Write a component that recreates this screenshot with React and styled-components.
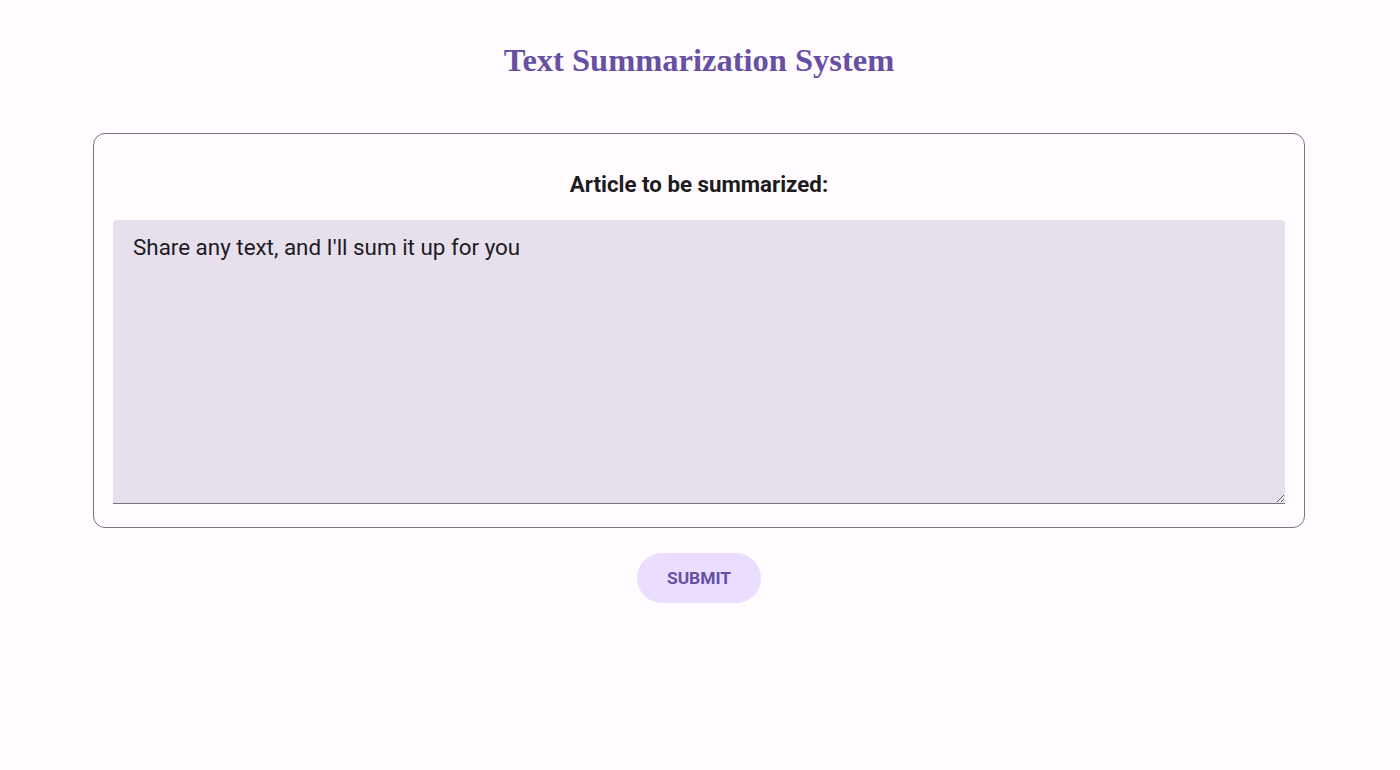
import styled, { createGlobalStyle } from "styled-components";

const GlobalStyle = createGlobalStyle`
    body {
        margin: 0;
        background-color: #FFFBFE;
        font-family: 'Roboto', sans-serif;
    }
`

export default function App() {
    return (
        <Page>
            <GlobalStyle />
            <Title>Text Summarization System</Title>
            <Card>
                <Label htmlFor="article">Article to be summarized:</Label>
                <TextBox id="article" placeholder="Share any text, and I'll sum it up for you" />
            </Card>
            <SubmitButton>SUBMIT</SubmitButton>
        </Page>
    );
}

const Page = styled.div`
    min-height: 770px;
    display: flex;
    flex-direction: column;
    align-items: center;
    padding-right: 2px;
    background-color: #FFFBFE;
`

const Title = styled.h1`
    font-family: 'Liberation Serif', serif;
    font-size: 32.5px;
    font-weight: 700;
    color: #6750A4;
    margin: 42px 0 0;
    line-height: 37px;
`

const Card = styled.div`
    box-sizing: border-box;
    width: 1212px;
    margin-top: 54px;
    padding: 37px 19px 23px 19px;
    border: 1px solid #79747E;
    border-radius: 12px;
    display: flex;
    flex-direction: column;
    align-items: center;
`

const Label = styled.label`
    font-family: 'Roboto', sans-serif;
    font-size: 22.3px;
    font-weight: 700;
    color: #1C1B1F;
    line-height: 26px;
    margin-bottom: 23px;
`

const TextBox = styled.textarea`
    box-sizing: border-box;
    width: 100%;
    height: 284px;
    padding: 12px 20px;
    border: none;
    border-bottom: 1px solid #79747E;
    border-radius: 4px 4px 0 0;
    background-color: #E7E0EC;
    font-family: 'Roboto', sans-serif;
    font-size: 22.4px;
    line-height: 30px;
    color: #1C1B1F;
    outline: none;
    &::placeholder {
        color: #1C1B1F;
        opacity: 1;
    }
`

const SubmitButton = styled.button`
    margin-top: 25px;
    width: 124px;
    height: 50px;
    border: none;
    border-radius: 25px;
    background-color: #EADDFF;
    color: #6750A4;
    font-family: 'Roboto', sans-serif;
    font-size: 17.4px;
    font-weight: 700;
    cursor: pointer;
`
